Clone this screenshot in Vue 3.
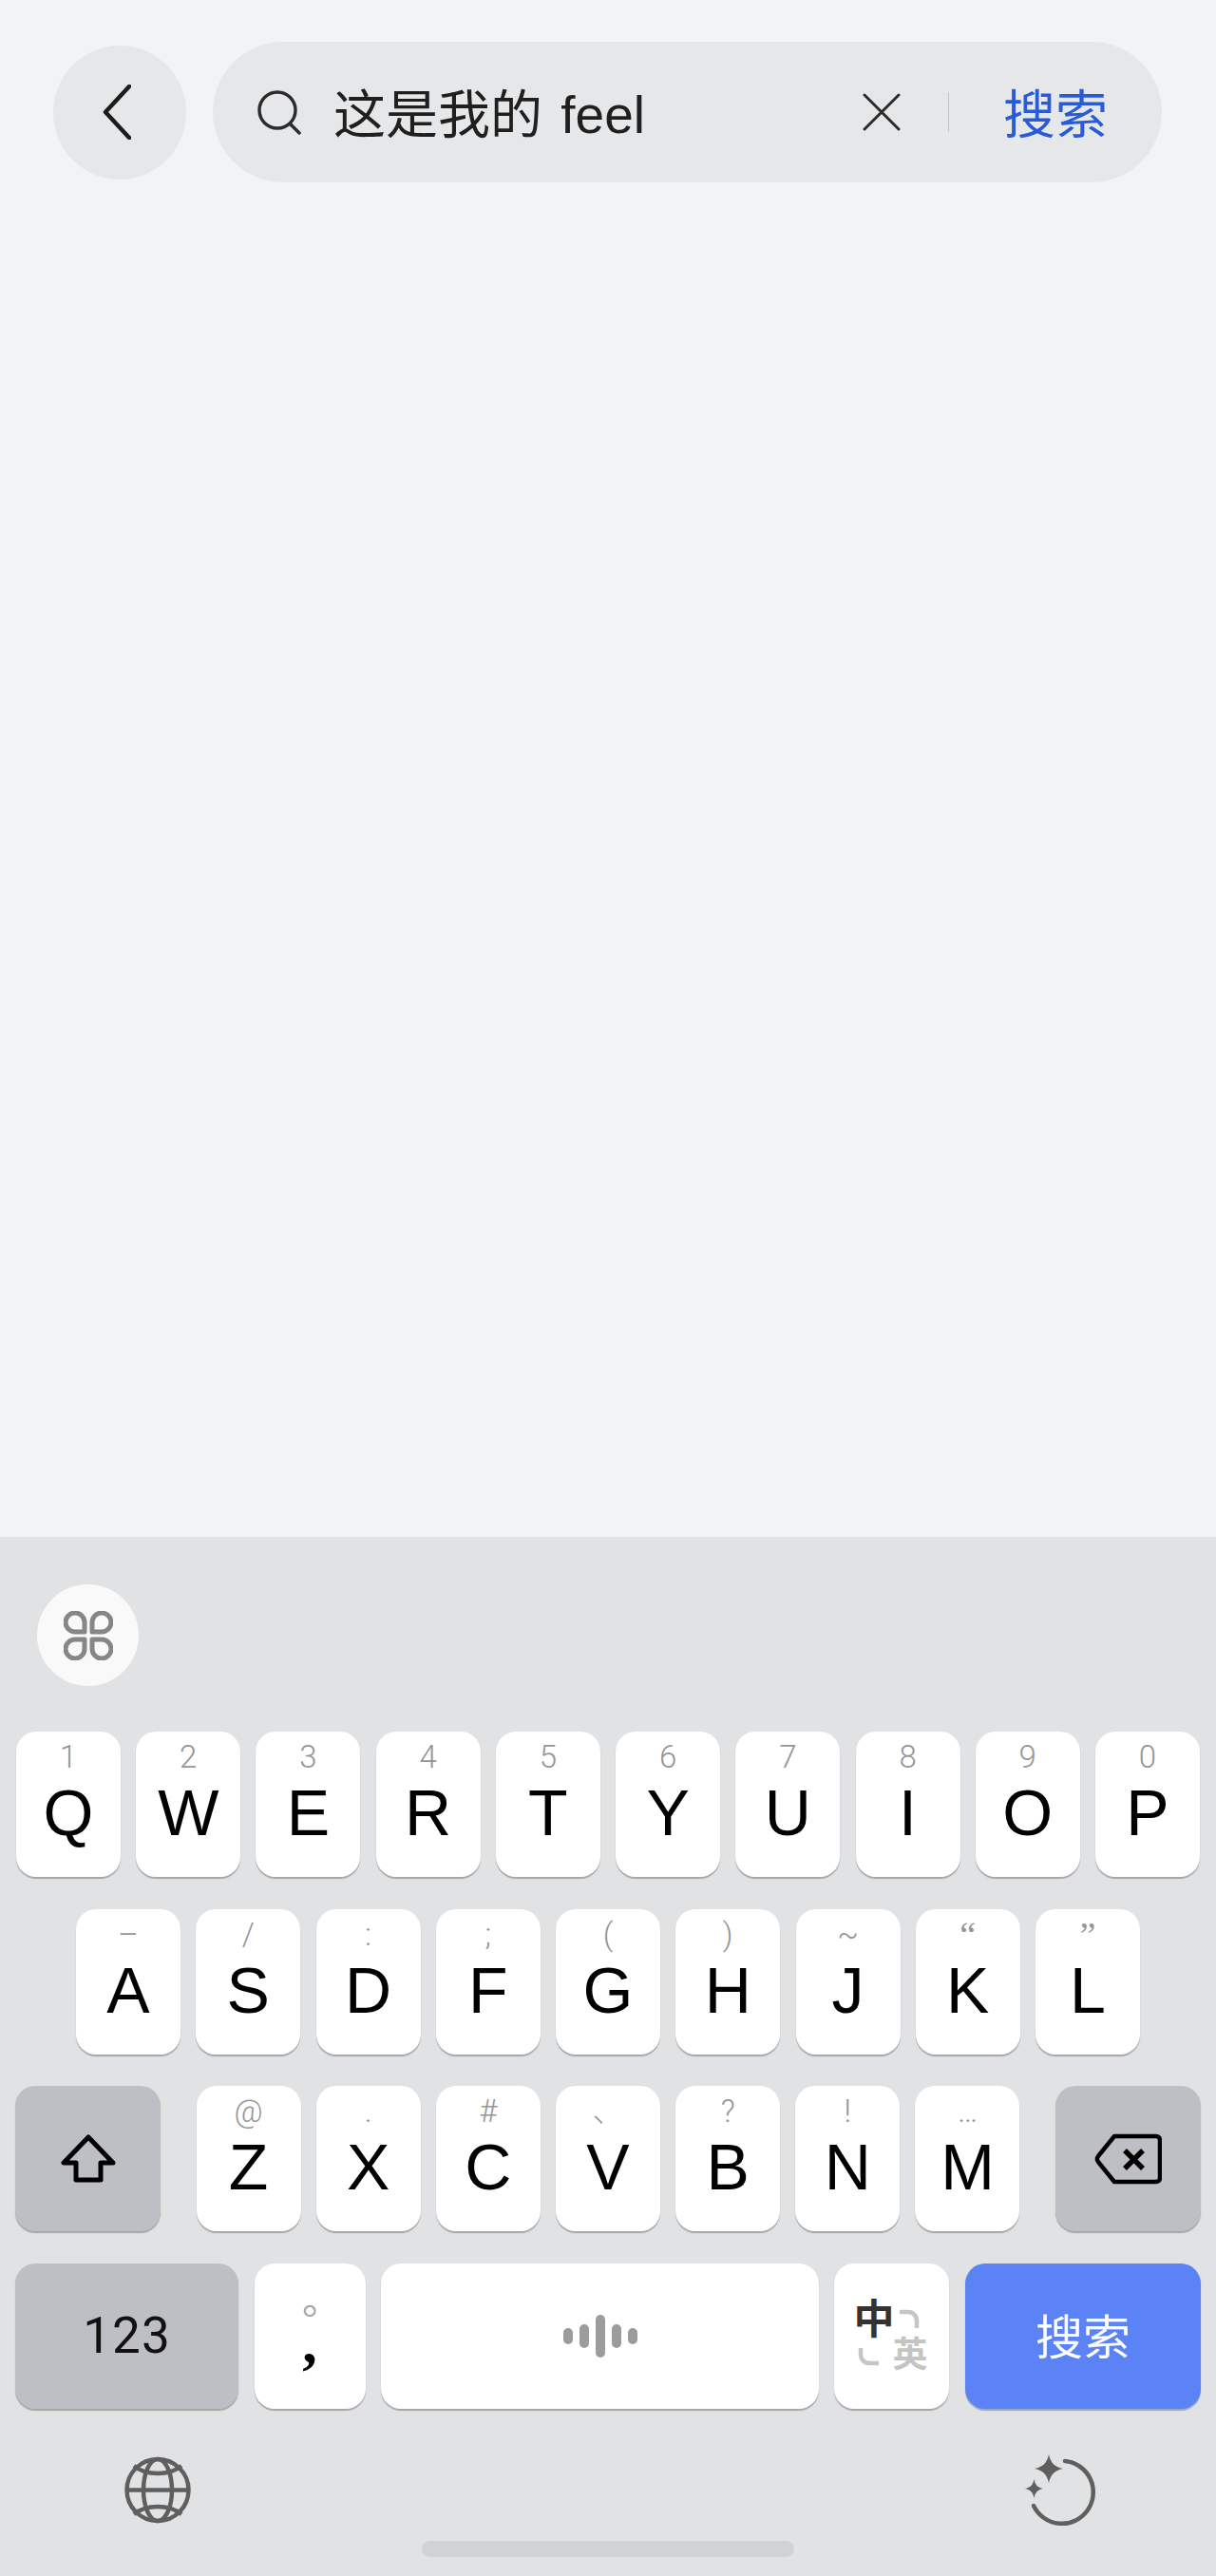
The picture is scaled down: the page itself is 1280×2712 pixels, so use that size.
<script setup>
const row1 = [
  ["1", "Q"], ["2", "W"], ["3", "E"], ["4", "R"], ["5", "T"],
  ["6", "Y"], ["7", "U"], ["8", "I"], ["9", "O"], ["0", "P"],
];
const row2 = [
  ["–", "A"], ["/", "S"], [":", "D"], [";", "F"], ["(", "G"],
  [")", "H"], ["~", "J"], ["“", "K"], ["”", "L"],
];
const row3 = [
  ["@", "Z"], [".", "X"], ["#", "C"], ["、", "V"], ["?", "B"], ["!", "N"], ["…", "M"],
];
const voiceBars = [17, 25, 45, 25, 17];
const isQuote = (s) => s === "“" || s === "”";
</script>

<template>
  <div class="page">
    <header class="topbar">
      <div class="back">
        <svg width="30" height="58" viewBox="0 0 30 58" fill="none">
          <path d="M28 2 3 29l25 27" stroke="#1c1c1c" stroke-width="4.500" stroke-linecap="round" stroke-linejoin="round" />
        </svg>
      </div>
      <div class="search">
        <svg class="search-icon" width="46" height="47" viewBox="0 0 46 47" fill="none">
          <circle cx="21" cy="21" r="19" stroke="#2b2b2b" stroke-width="3.400" />
          <path d="m35 36 9 9" stroke="#2b2b2b" stroke-width="3.400" stroke-linecap="round" />
        </svg>
        <span class="query">这是我的 feel</span>
        <svg class="clear" width="40" height="40" viewBox="0 0 40 40" fill="none">
          <path d="M2 2l36 36M38 2 2 38" stroke="#2b2b2b" stroke-width="3" stroke-linecap="round" />
        </svg>
        <i class="divider"></i>
        <span class="go">搜索</span>
      </div>
    </header>

    <section class="keyboard">
      <div class="tools">
        <div class="tool-btn">
          <svg width="52" height="52" viewBox="0 0 52 52" fill="none" stroke="#868686" stroke-width="5" stroke-linejoin="round">
            <path d="M22 22H12A10 10 0 1 1 22 12Z" />
            <path d="M30 22H40A10 10 0 1 0 30 12Z" />
            <path d="M22 30H12A10 10 0 1 0 22 40Z" />
            <path d="M30 30H40A10 10 0 1 1 30 40Z" />
          </svg>
        </div>
      </div>

      <div class="rows">
        <div class="row row-top">
          <div v-for="k in row1" :key="k[1]" class="key">
            <span class="hint">{{ k[0] }}</span>
            <span class="letter">{{ k[1] }}</span>
          </div>
        </div>

        <div class="row row-mid">
          <div v-for="k in row2" :key="k[1]" class="key">
            <span class="hint" :class="{ quote: isQuote(k[0]) }">{{ k[0] }}</span>
            <span class="letter">{{ k[1] }}</span>
          </div>
        </div>

        <div class="row row-low">
          <div class="key wide func">
            <svg width="58" height="51" viewBox="0 0 58 51" fill="none">
              <path d="M29 3 3 30h13v18h26V30h13Z" stroke="#000" stroke-width="5" stroke-linejoin="round" />
            </svg>
          </div>
          <div class="letters">
            <div v-for="k in row3" :key="k[1]" class="key">
              <span class="hint">{{ k[0] }}</span>
              <span class="letter">{{ k[1] }}</span>
            </div>
          </div>
          <div class="key wide func">
            <svg width="71" height="54" viewBox="0 0 71 54" fill="none">
              <path d="M21 3h44a4 4 0 0 1 4 4v40a4 4 0 0 1-4 4H21L4 30a5 5 0 0 1 0-6Z" stroke="#000" stroke-width="4.500" stroke-linejoin="round" />
              <path d="M32 18l19 19M51 18 32 37" stroke="#000" stroke-width="5.500" />
            </svg>
          </div>
        </div>

        <div class="row row-bottom">
          <div class="key num func">123</div>
          <div class="key comma">
            <span class="period">。</span>
            <span class="comma-mark">,</span>
          </div>
          <div class="key space">
            <i
              v-for="(h, i) in voiceBars"
              :key="i"
              class="bar"
              :style="{ height: h + 'px' }"
            ></i>
          </div>
          <div class="key lang">
            <div class="lang-grid">
              <span class="zh">中</span>
              <svg class="arc-a" width="22" height="20" viewBox="0 0 22 20" fill="none">
                <path d="M1 3h9a9 9 0 0 1 9 9v8" stroke="#c6c6c6" stroke-width="4.500" />
              </svg>
              <svg class="arc-b" width="22" height="19" viewBox="0 0 22 19" fill="none">
                <path d="M3 0v7a9 9 0 0 0 9 9h10" stroke="#c6c6c6" stroke-width="4.500" />
              </svg>
              <span class="en">英</span>
            </div>
          </div>
          <div class="key enter"><span class="enter-text">搜索</span></div>
        </div>
      </div>

      <div class="bottom">
        <svg width="70" height="71" viewBox="0 0 70 71" fill="none" stroke="#5f5f5f" stroke-width="4.500">
          <circle cx="35" cy="35.500" r="32.500" />
          <ellipse cx="35" cy="35.500" rx="15" ry="32.500" />
          <path d="M3 35.500h64" />
          <path d="M10 10c6 5 15 8 25 8s19-3 25-8" />
          <path d="M10 61c6-5 15-8 25-8s19 3 25 8" />
        </svg>
        <svg width="76" height="76" viewBox="0 0 76 76" fill="none">
          <path d="M42 7a33 33 0 1 1-33 47" stroke="#5f5f5f" stroke-width="4.500" stroke-linecap="round" />
          <path d="M25 0c2 9 6 13 15 15-9 2-13 6-15 15-2-9-6-13-15-15 9-2 13-6 15-15Z" fill="#5f5f5f" />
          <path d="M9.500 26c1 6 4 9 9.500 10-5.500 1-8.500 4-9.500 10-1-6-4-9-9.500-10 5.500-1 8.500-4 9.500-10Z" fill="#5f5f5f" />
        </svg>
      </div>

      <div class="home-bar"></div>
    </section>
  </div>
</template>

<style>
html,
body {
  margin: 0;
  background: #f2f3f5;
}
</style>

<style scoped>
.page {
  width: 1280px;
  height: 2712px;
  display: flex;
  flex-direction: column;
  justify-content: space-between;
  background: #f2f3f5;
  font-family: "Liberation Sans", "Noto Sans CJK SC", sans-serif;
  overflow: hidden;
}

.topbar {
  display: flex;
  align-items: center;
  gap: 28px;
  padding: 44px 57px 0 56px;
}

.back {
  width: 140px;
  height: 141px;
  flex: none;
  border-radius: 50%;
  background: #e6e7e9;
  display: flex;
  align-items: center;
  justify-content: center;
  padding-right: 7px;
  box-sizing: border-box;
}

.search {
  flex: 1;
  height: 148px;
  border-radius: 74px;
  background: #e6e7e9;
  display: flex;
  align-items: center;
  padding: 0 57px 0 47px;
}

.search-icon {
  flex: none;
  margin-right: 34px;
}

.query {
  flex: 1;
  padding-top: 6px;
  font-size: 55px;
  line-height: 70px;
  word-spacing: 4px;
  color: #1f1f1f;
}

.clear {
  flex: none;
}

.divider {
  width: 1px;
  height: 42px;
  margin: 0 57px 0 50px;
  background: #c4c5c7;
}

.go {
  padding-top: 6px;
  font-size: 55px;
  line-height: 70px;
  color: #2a5bd7;
}

.keyboard {
  height: 1094px;
  background: #e1e2e4;
}

.tools {
  padding: 50px 0 48px 39px;
}

.tool-btn {
  width: 107px;
  height: 107px;
  border-radius: 50%;
  background: #f9f9f9;
  display: flex;
  align-items: center;
  justify-content: center;
}

.rows {
  display: flex;
  flex-direction: column;
  gap: 33.6px;
}

.row {
  display: flex;
  justify-content: space-between;
}

.row-top {
  padding: 0 17px;
}

.row-mid {
  padding: 0 80px;
}

.row-low {
  padding: 0 16px;
}

.row-bottom {
  padding: 0 16px;
  gap: 16.600px;
}

.letters {
  display: flex;
  gap: 16.170px;
}

.key {
  width: 110px;
  height: 153px;
  flex: none;
  border-radius: 21px;
  background: #fff;
  box-shadow: 0 2px 1px #a6a7a9;
  display: flex;
  flex-direction: column;
  align-items: center;
  color: #000;
}

.hint {
  height: 28px;
  margin-top: 13px;
  font-family: Roboto, "Noto Sans CJK SC", sans-serif;
  font-weight: 300;
  font-size: 33px;
  line-height: 28px;
  color: #959595;
}

.quote {
  font-family: "Liberation Serif", serif;
  font-weight: 400;
  font-size: 38px;
}

.letter {
  font-size: 68px;
  line-height: 68px;
  margin-top: 10px;
}

.func {
  background: #bdbfc4;
  justify-content: center;
}

.wide {
  width: 153px;
}

.num {
  width: 235px;
  font-family: Roboto, sans-serif;
  font-size: 53px;
  letter-spacing: 1px;
  color: #111;
}

.comma {
  width: 117px;
}

.period {
  height: 24px;
  margin-top: 36px;
  font-family: "Noto Sans CJK TC", sans-serif;
  font-size: 42px;
  line-height: 24px;
  color: #a8a8a8;
}

.comma-mark {
  font-family: "Liberation Serif", serif;
  font-weight: 700;
  font-size: 62px;
  line-height: 46px;
}

.space {
  flex: 1;
  flex-direction: row;
  justify-content: center;
  gap: 7px;
}

.bar {
  width: 10px;
  border-radius: 5px;
  background: #9c9c9c;
}

.lang {
  width: 121px;
  justify-content: center;
  align-items: flex-start;
}

.lang-grid {
  display: grid;
  grid-template-columns: 41px 37px;
  grid-template-rows: 42px 34px;
  padding-left: 20px;
}

.zh {
  font-size: 43px;
  line-height: 42px;
  font-weight: 700;
  color: #333;
}

.en {
  font-size: 37px;
  line-height: 34px;
  font-weight: 700;
  color: #c4c4c4;
}

.arc-a {
  align-self: end;
  margin: 0 0 12px 7px;
}

.arc-b {
  margin: 9px 0 0 5px;
}

.enter {
  width: 248px;
  background: #5b83f5;
  box-shadow: 0 2px 1px #9aa6c4;
  justify-content: center;
  font-size: 50px;
  color: #fff;
}

.enter-text {
  margin-top: -4px;
}

.bottom {
  height: 76px;
  margin-top: 48px;
  padding: 0 125px 0 131px;
  display: flex;
  align-items: center;
  justify-content: space-between;
}

.home-bar {
  width: 392px;
  height: 17px;
  margin: 15px auto 0;
  border-radius: 9px;
  background: #d1d2d4;
}
</style>
